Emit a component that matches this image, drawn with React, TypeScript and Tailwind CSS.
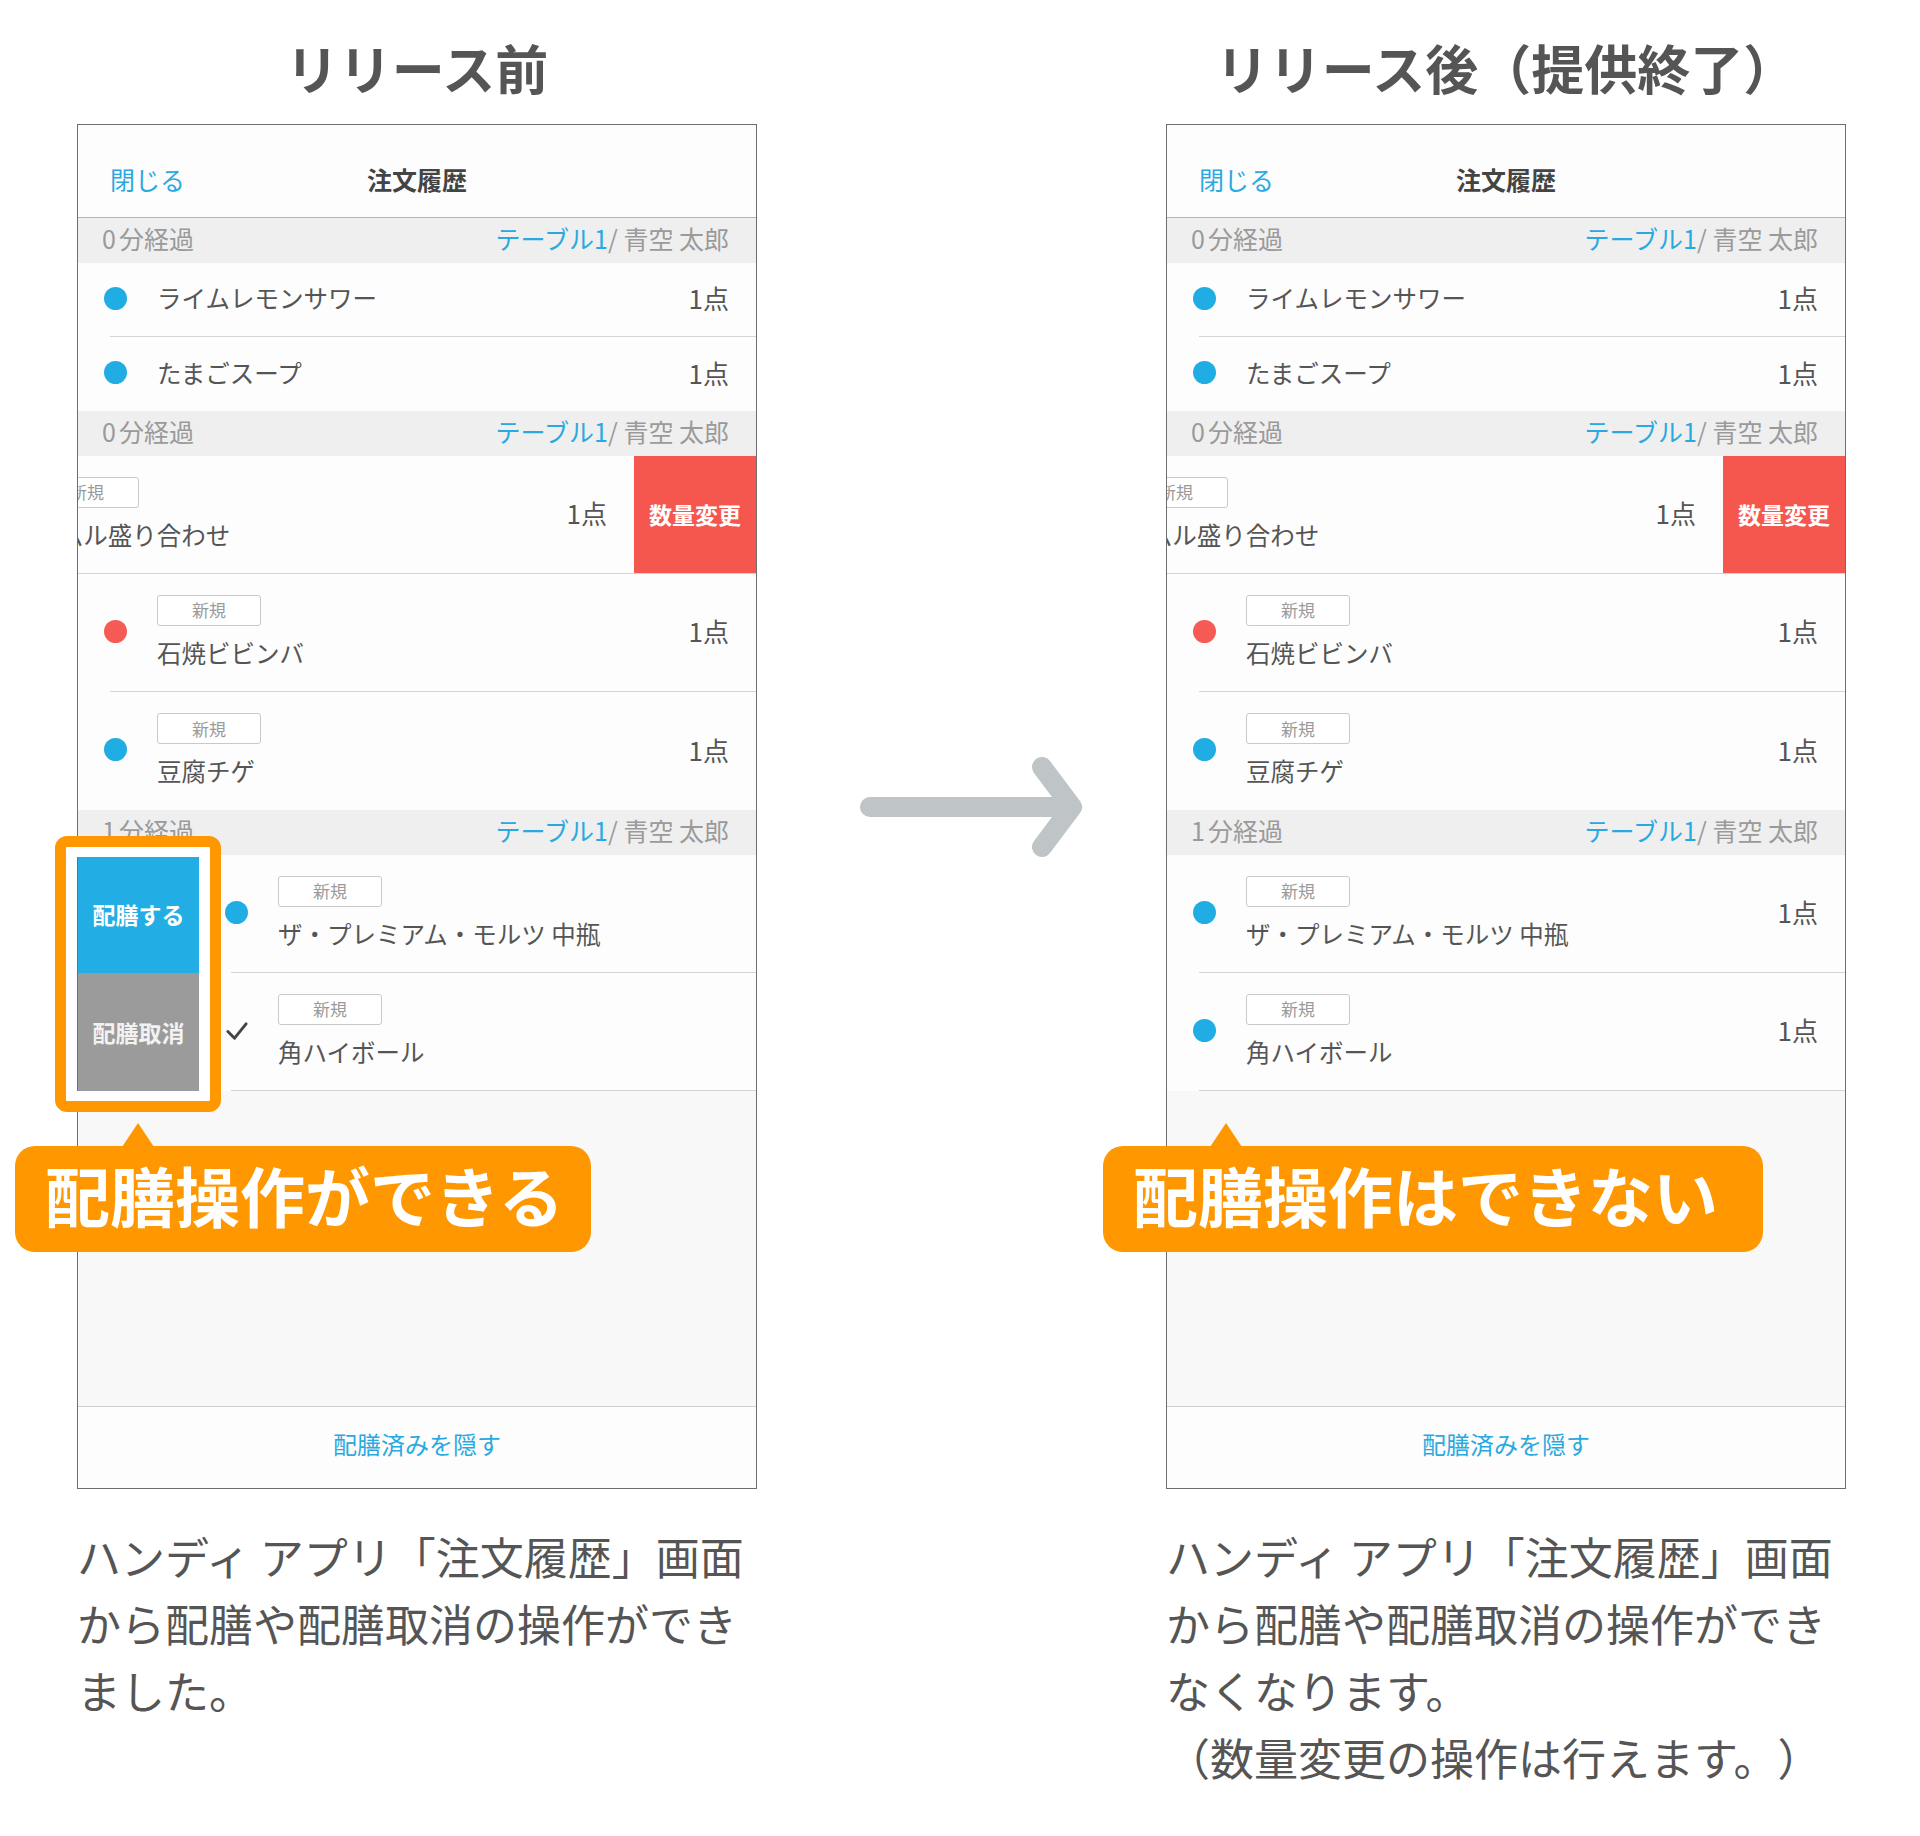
import React from "react";

type Item = {
  name: string;
  dot: "blue" | "red" | "check";
  badge?: boolean;
  divider?: boolean;
};

function Dot({ kind }: { kind: string }) {
  if (kind === "check") {
    return (
      <svg width="23" height="23" viewBox="0 0 24 24" className="shrink-0">
        <path d="M3 13l7 7L22 5" fill="none" stroke="#444" strokeWidth="3" strokeLinecap="round" strokeLinejoin="round" />
      </svg>
    );
  }
  return (
    <span
      className={
        kind === "red"
          ? "w-[23px] h-[23px] rounded-full bg-[#f55a55] shrink-0"
          : "w-[23px] h-[23px] rounded-full bg-[#20ade4] shrink-0"
      }
    />
  );
}

function RowContent({ item }: { item: Item }) {
  return (
    <div className="flex flex-1 items-center pl-[26px] pr-[27px] pb-[3px]">
      <Dot kind={item.dot} />
      <div className="ml-[30px] flex-1 min-w-0">
        {item.badge && (
          <div className="w-[104px] h-[31px] border border-[#c9c9c9] rounded-[3px] bg-white flex items-center justify-center text-[17px] text-[#9a9a9a]">
            新規
          </div>
        )}
        <div className={item.badge ? "mt-[12px] text-[24.5px] leading-[30px] text-[#555]" : "text-[24.5px] leading-[30px] text-[#555]"}>
          {item.name}
        </div>
      </div>
      <div className="text-[26px] leading-[30px] text-[#555]">1点</div>
    </div>
  );
}

function Row({ item, tall }: { item: Item; tall?: boolean }) {
  return (
    <div className={tall ? "flex flex-col h-[118px] bg-[#fdfdfd]" : "flex flex-col h-[74px] bg-[#fdfdfd]"}>
      <RowContent item={item} />
      {item.divider && <div className="ml-[32px] h-px bg-[#d4d4d4]" />}
    </div>
  );
}

function GroupHeader({ time }: { time: string }) {
  return (
    <div className="h-[45px] shrink-0 bg-[#efefef] flex items-center justify-between pl-[24px] pr-[27px] pb-[3px] text-[25px] text-[#9a9a9a]">
      <span>
        {time.slice(0, 1)}
        <span className="ml-[3px]">{time.slice(1)}</span>
      </span>
      <span>
        <span className="text-[#2aa9e0]">テーブル1</span>/ 青空 太郎
      </span>
    </div>
  );
}

function Panel({ before }: { before: boolean }) {
  const nam: Item = { name: "ナムル盛り合わせ", dot: "blue", badge: true };
  const g3: Item[] = [
    { name: "ザ・プレミアム・モルツ 中瓶", dot: "blue", badge: true, divider: true },
    { name: "角ハイボール", dot: before ? "check" : "blue", badge: true, divider: true },
  ];

  return (
    <div className="h-[1365px] border border-[#6e6e6e] bg-[#f8f8f8] flex flex-col overflow-hidden">
      <div className="h-[93px] shrink-0 grid grid-cols-[1fr_auto_1fr] items-end pb-[23px] bg-[#fdfdfd] border-b border-[#b5b5b5] text-[25px] leading-[30px]">
        <span className="pl-[32px] text-[#2aa9e0]">閉じる</span>
        <span className="font-bold text-[#444]">注文履歴</span>
        <span />
      </div>

      <GroupHeader time="0分経過" />
      <Row item={{ name: "ライムレモンサワー", dot: "blue", divider: true }} />
      <Row item={{ name: "たまごスープ", dot: "blue" }} />

      <GroupHeader time="0分経過" />
      <div className="flex flex-col h-[118px] bg-[#fdfdfd]">
        <div className="flex flex-1">
          <div className="w-[678px] shrink-0 -ml-[122px] flex">
            <RowContent item={nam} />
          </div>
          <div className="w-[122px] shrink-0 bg-[#f5574f] flex items-center justify-center text-white font-bold text-[23px]">
            数量変更
          </div>
        </div>
        <div className="h-px bg-[#d4d4d4]" />
      </div>
      <Row tall item={{ name: "石焼ビビンバ", dot: "red", badge: true, divider: true }} />
      <Row tall item={{ name: "豆腐チゲ", dot: "blue", badge: true }} />

      <GroupHeader time="1分経過" />
      {before ? (
        g3.map((it, i) => (
          <div key={it.name} className="flex h-[118px] shrink-0 bg-[#fdfdfd]">
            <div
              className={
                i === 0
                  ? "w-[121px] shrink-0 bg-[#22aee4] flex items-center justify-center text-white font-bold text-[23px]"
                  : "w-[121px] shrink-0 bg-[#9b9b9b] flex items-center justify-center text-[#f2f2f2] font-bold text-[23px]"
              }
            >
              {i === 0 ? "配膳する" : "配膳取消"}
            </div>
            <div className="w-[678px] shrink-0 flex flex-col">
              <RowContent item={it} />
              <div className="ml-[32px] h-px bg-[#d4d4d4]" />
            </div>
          </div>
        ))
      ) : (
        g3.map((it) => <Row key={it.name} tall item={it} />)
      )}

      <div className="flex-1" />
      <div className="h-[82px] shrink-0 border-t border-[#cfcfcf] bg-[#fdfdfd] flex items-center justify-center pb-[8px] text-[24px] text-[#2aa9e0]">
        配膳済みを隠す
      </div>
    </div>
  );
}

function Callout({ text, wide }: { text: string; wide?: boolean }) {
  return (
    <div
      className={
        wide
          ? "absolute top-[1146px] -left-[63px] w-[660px] h-[106px] rounded-[20px] bg-[#ff9700] flex items-center pl-[30px] pb-[9px] z-20"
          : "absolute top-[1146px] -left-[62px] w-[576px] h-[106px] rounded-[20px] bg-[#ff9700] flex items-center pl-[30px] pb-[9px] z-20"
      }
    >
      <span className="absolute -top-[23px] left-[107px] w-0 h-0 border-l-[16px] border-r-[16px] border-b-[24px] border-l-transparent border-r-transparent border-b-[#ff9700]" />
      <span className="text-white font-bold text-[65px] leading-none">{text}</span>
    </div>
  );
}

export default function App() {
  return (
    <div className="min-h-[1836px] bg-white flex pl-[77px] font-['Noto_Sans_CJK_JP','Noto_Sans',sans-serif]">
      <div className="relative w-[680px] shrink-0">
        <div className="h-[124px] pt-[37px]">
          <h1 className="text-center text-[53px] leading-[60px] font-bold text-[#555]">リリース前</h1>
        </div>
        <Panel before />
        <p className="mt-[34px] text-[44px] leading-[67px] text-[#555] [text-spacing-trim:space-all]">
          ハンディ アプリ「注文履歴」画面
          <br />
          から配膳や配膳取消の操作ができ
          <br />
          ました。
        </p>
        <div className="absolute top-[836px] -left-[22px] w-[166px] h-[276px] border-[11px] border-[#ff9700] rounded-[12px] shadow-[inset_0_0_0_10px_#ffffff] z-10" />
        <Callout text="配膳操作ができる" />
      </div>

      <div className="w-[409px] shrink-0 pt-[755px] pl-[93px]">
        <svg width="240" height="105" viewBox="0 0 240 105">
          <path
            d="M20 52H222M192 12L222 52L192 92"
            fill="none"
            stroke="#bfc4c6"
            strokeWidth="20"
            strokeLinecap="round"
            strokeLinejoin="round"
          />
        </svg>
      </div>

      <div className="relative w-[680px] shrink-0">
        <div className="h-[124px] pt-[37px]">
          <h1 className="text-center text-[53px] leading-[60px] font-bold text-[#555]">リリース後（提供終了）</h1>
        </div>
        <Panel before={false} />
        <p className="mt-[34px] text-[44px] leading-[67px] text-[#555] [text-spacing-trim:space-all]">
          ハンディ アプリ「注文履歴」画面
          <br />
          から配膳や配膳取消の操作ができ
          <br />
          なくなります。
          <br />
          （数量変更の操作は行えます。）
        </p>
        <Callout text="配膳操作はできない" wide />
      </div>
    </div>
  );
}
